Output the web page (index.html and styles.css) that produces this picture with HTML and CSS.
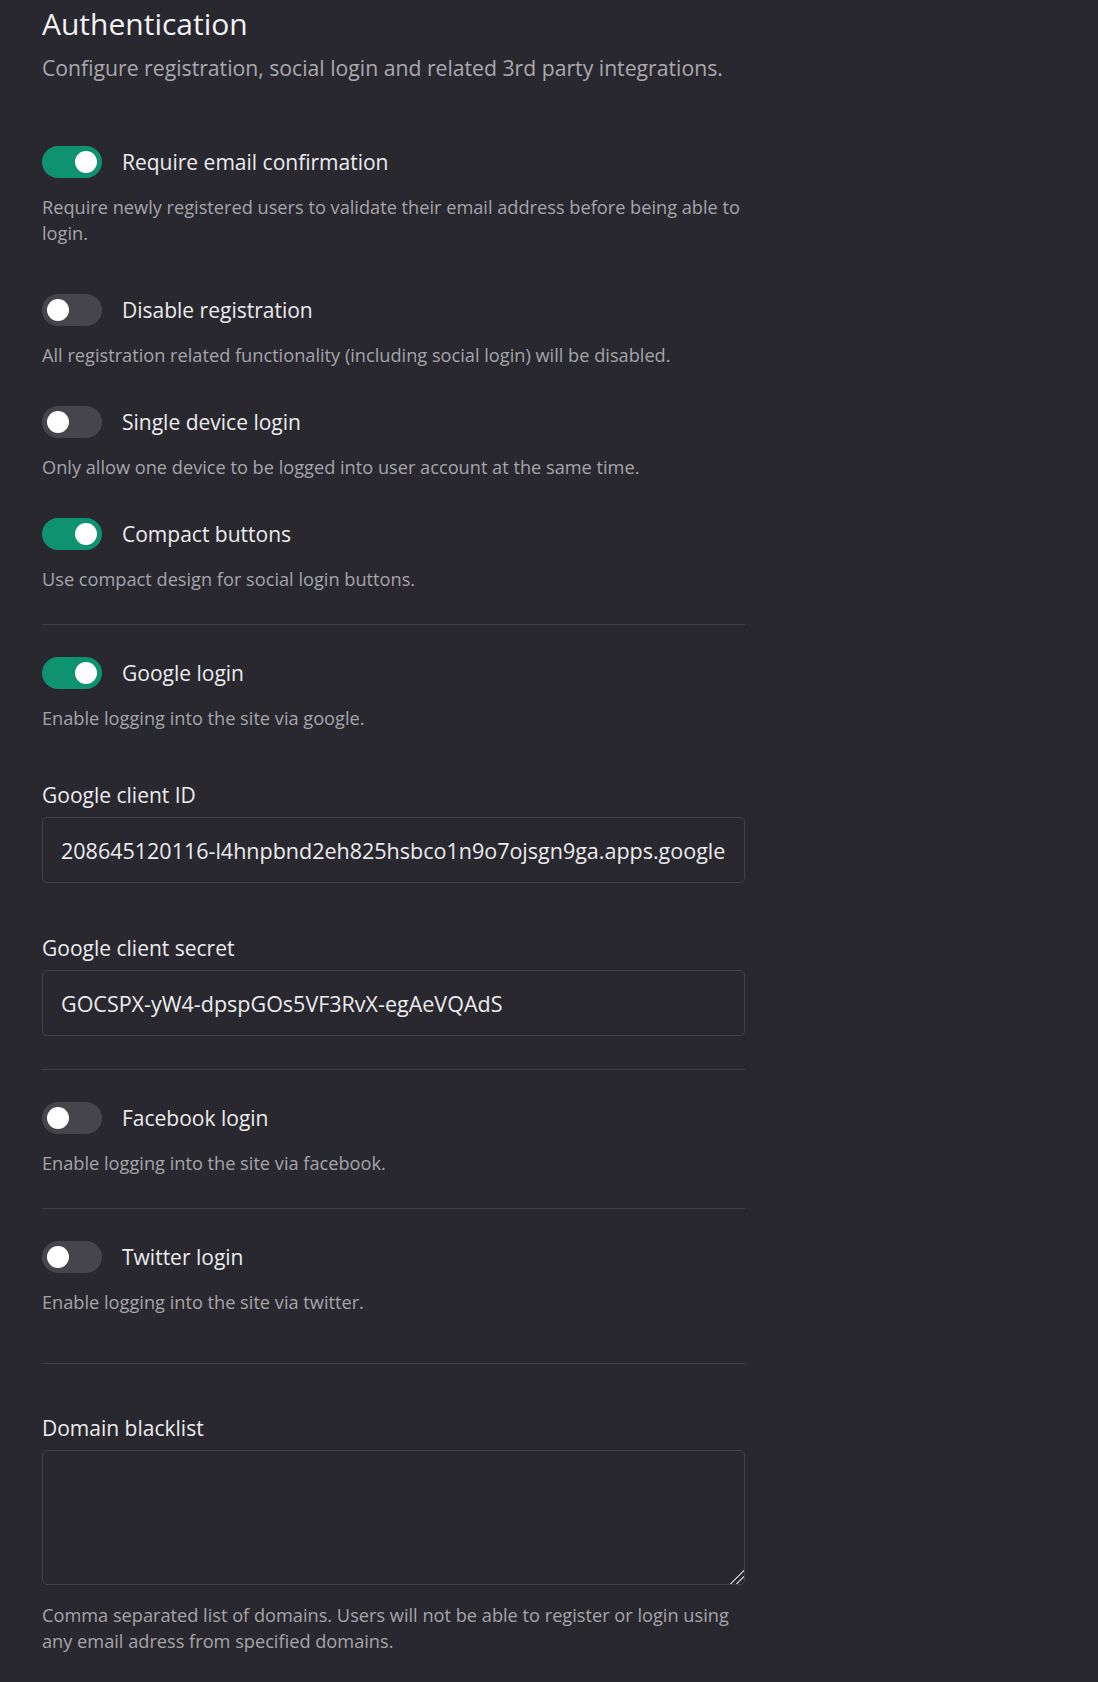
FILE: index.html
```html
<!DOCTYPE html>
<html lang="en">
<head>
<meta charset="utf-8">
<title>Authentication</title>
<link rel="stylesheet" href="styles.css">
</head>
<body>
<main class="page">
  <header class="head">
    <h1 class="title">Authentication</h1>
    <p class="subtitle">Configure registration, social login and related 3rd party integrations.</p>
  </header>

  <section class="setting setting-first">
    <div class="row"><span class="toggle on"><span class="knob"></span></span><span class="label">Require email confirmation</span></div>
    <p class="desc">Require newly registered users to validate their email address before being able to login.</p>
  </section>

  <section class="setting">
    <div class="row"><span class="toggle"><span class="knob"></span></span><span class="label">Disable registration</span></div>
    <p class="desc">All registration related functionality (including social login) will be disabled.</p>
  </section>

  <section class="setting">
    <div class="row"><span class="toggle"><span class="knob"></span></span><span class="label">Single device login</span></div>
    <p class="desc">Only allow one device to be logged into user account at the same time.</p>
  </section>

  <section class="setting setting-last">
    <div class="row"><span class="toggle on"><span class="knob"></span></span><span class="label">Compact buttons</span></div>
    <p class="desc">Use compact design for social login buttons.</p>
  </section>

  <hr class="divider">

  <section class="setting setting-last">
    <div class="row"><span class="toggle on"><span class="knob"></span></span><span class="label">Google login</span></div>
    <p class="desc">Enable logging into the site via google.</p>
  </section>

  <div class="field">
    <label class="field-label" for="gid">Google client ID</label>
    <input class="input" id="gid" type="text" value="208645120116-l4hnpbnd2eh825hsbco1n9o7ojsgn9ga.apps.googleusercontent.com">
  </div>

  <div class="field">
    <label class="field-label" for="gsecret">Google client secret</label>
    <input class="input" id="gsecret" type="text" value="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">
  </div>

  <hr class="divider">

  <section class="setting setting-last">
    <div class="row"><span class="toggle"><span class="knob"></span></span><span class="label">Facebook login</span></div>
    <p class="desc">Enable logging into the site via facebook.</p>
  </section>

  <hr class="divider">

  <section class="setting setting-twitter">
    <div class="row"><span class="toggle"><span class="knob"></span></span><span class="label">Twitter login</span></div>
    <p class="desc">Enable logging into the site via twitter.</p>
  </section>

  <hr class="divider">

  <div class="field">
    <label class="field-label" for="blacklist">Domain blacklist</label>
    <textarea class="textarea" id="blacklist"></textarea>
    <p class="desc field-desc">Comma separated list of domains. Users will not be able to register or login using any email adress from specified domains.</p>
  </div>
</main>
</body>
</html>
```

FILE: styles.css
```css
html, body {
  margin: 0;
  padding: 0;
  background: #29282e;
}

body {
  font-family: "Open Sans", "Noto Sans", sans-serif;
  color: #ececee;
  min-height: 1682px;
}

.page {
  width: 703px;
  padding: 6px 0 40px 42px;
  box-sizing: content-box;
}

.title {
  margin: 0;
  font-size: 30px;
  line-height: 36px;
  font-weight: 400;
  color: #f2f2f4;
}

.subtitle {
  margin: 12px 0 0;
  font-size: 21.2px;
  line-height: 28px;
  color: #a9a9ae;
}

.head {
  margin-bottom: 64px;
}

.setting {
  margin-bottom: 38px;
}

.setting-first {
  margin-bottom: 48px;
}

.setting-last {
  margin-bottom: 32px;
}

.setting-twitter {
  margin-bottom: 48px;
}

.row {
  display: flex;
  align-items: center;
  gap: 20px;
  height: 32px;
}

.toggle {
  position: relative;
  flex: none;
  width: 60px;
  height: 32px;
  border-radius: 16px;
  background: #45454b;
}

.toggle.on {
  background: #0e9270;
}

.knob {
  position: absolute;
  top: 5px;
  left: 5px;
  width: 22px;
  height: 22px;
  border-radius: 50%;
  background: #ffffff;
}

.toggle.on .knob {
  left: 33px;
}

.label {
  font-size: 21px;
  line-height: 28px;
  color: #ececee;
}

.desc {
  margin: 16px 0 0;
  font-size: 18.2px;
  line-height: 26px;
  color: #a5a5aa;
}

.divider {
  margin: 0 0 32px;
  border: 0;
  height: 1px;
  background: #3d3d43;
}

.field {
  margin-top: 50px;
}

.field + .field {
  margin-top: 51px;
}

.field + .divider {
  margin-top: 33px;
}

.field-label {
  display: block;
  font-size: 21px;
  line-height: 28px;
  color: #ececee;
  margin-bottom: 8px;
}

.input,
.textarea {
  display: block;
  box-sizing: border-box;
  width: 100%;
  margin: 0;
  border: 1px solid #414147;
  border-radius: 5px;
  background: #29282e;
  color: #ececee;
  font-family: "Open Sans", "Noto Sans", sans-serif;
  font-size: 21.5px;
  outline: none;
  color-scheme: dark;
}

.input {
  height: 66px;
  padding: 0 18px;
}

.textarea {
  height: 135px;
  padding: 16px 18px;
  resize: vertical;
}

.textarea::-webkit-resizer {
  background: linear-gradient(135deg,
    transparent 0 52%,
    #b4b4b8 52% 60%,
    transparent 60% 72%,
    #b4b4b8 72% 80%,
    transparent 80%);
}

.field-desc {
  margin-top: 17px;
}
```
